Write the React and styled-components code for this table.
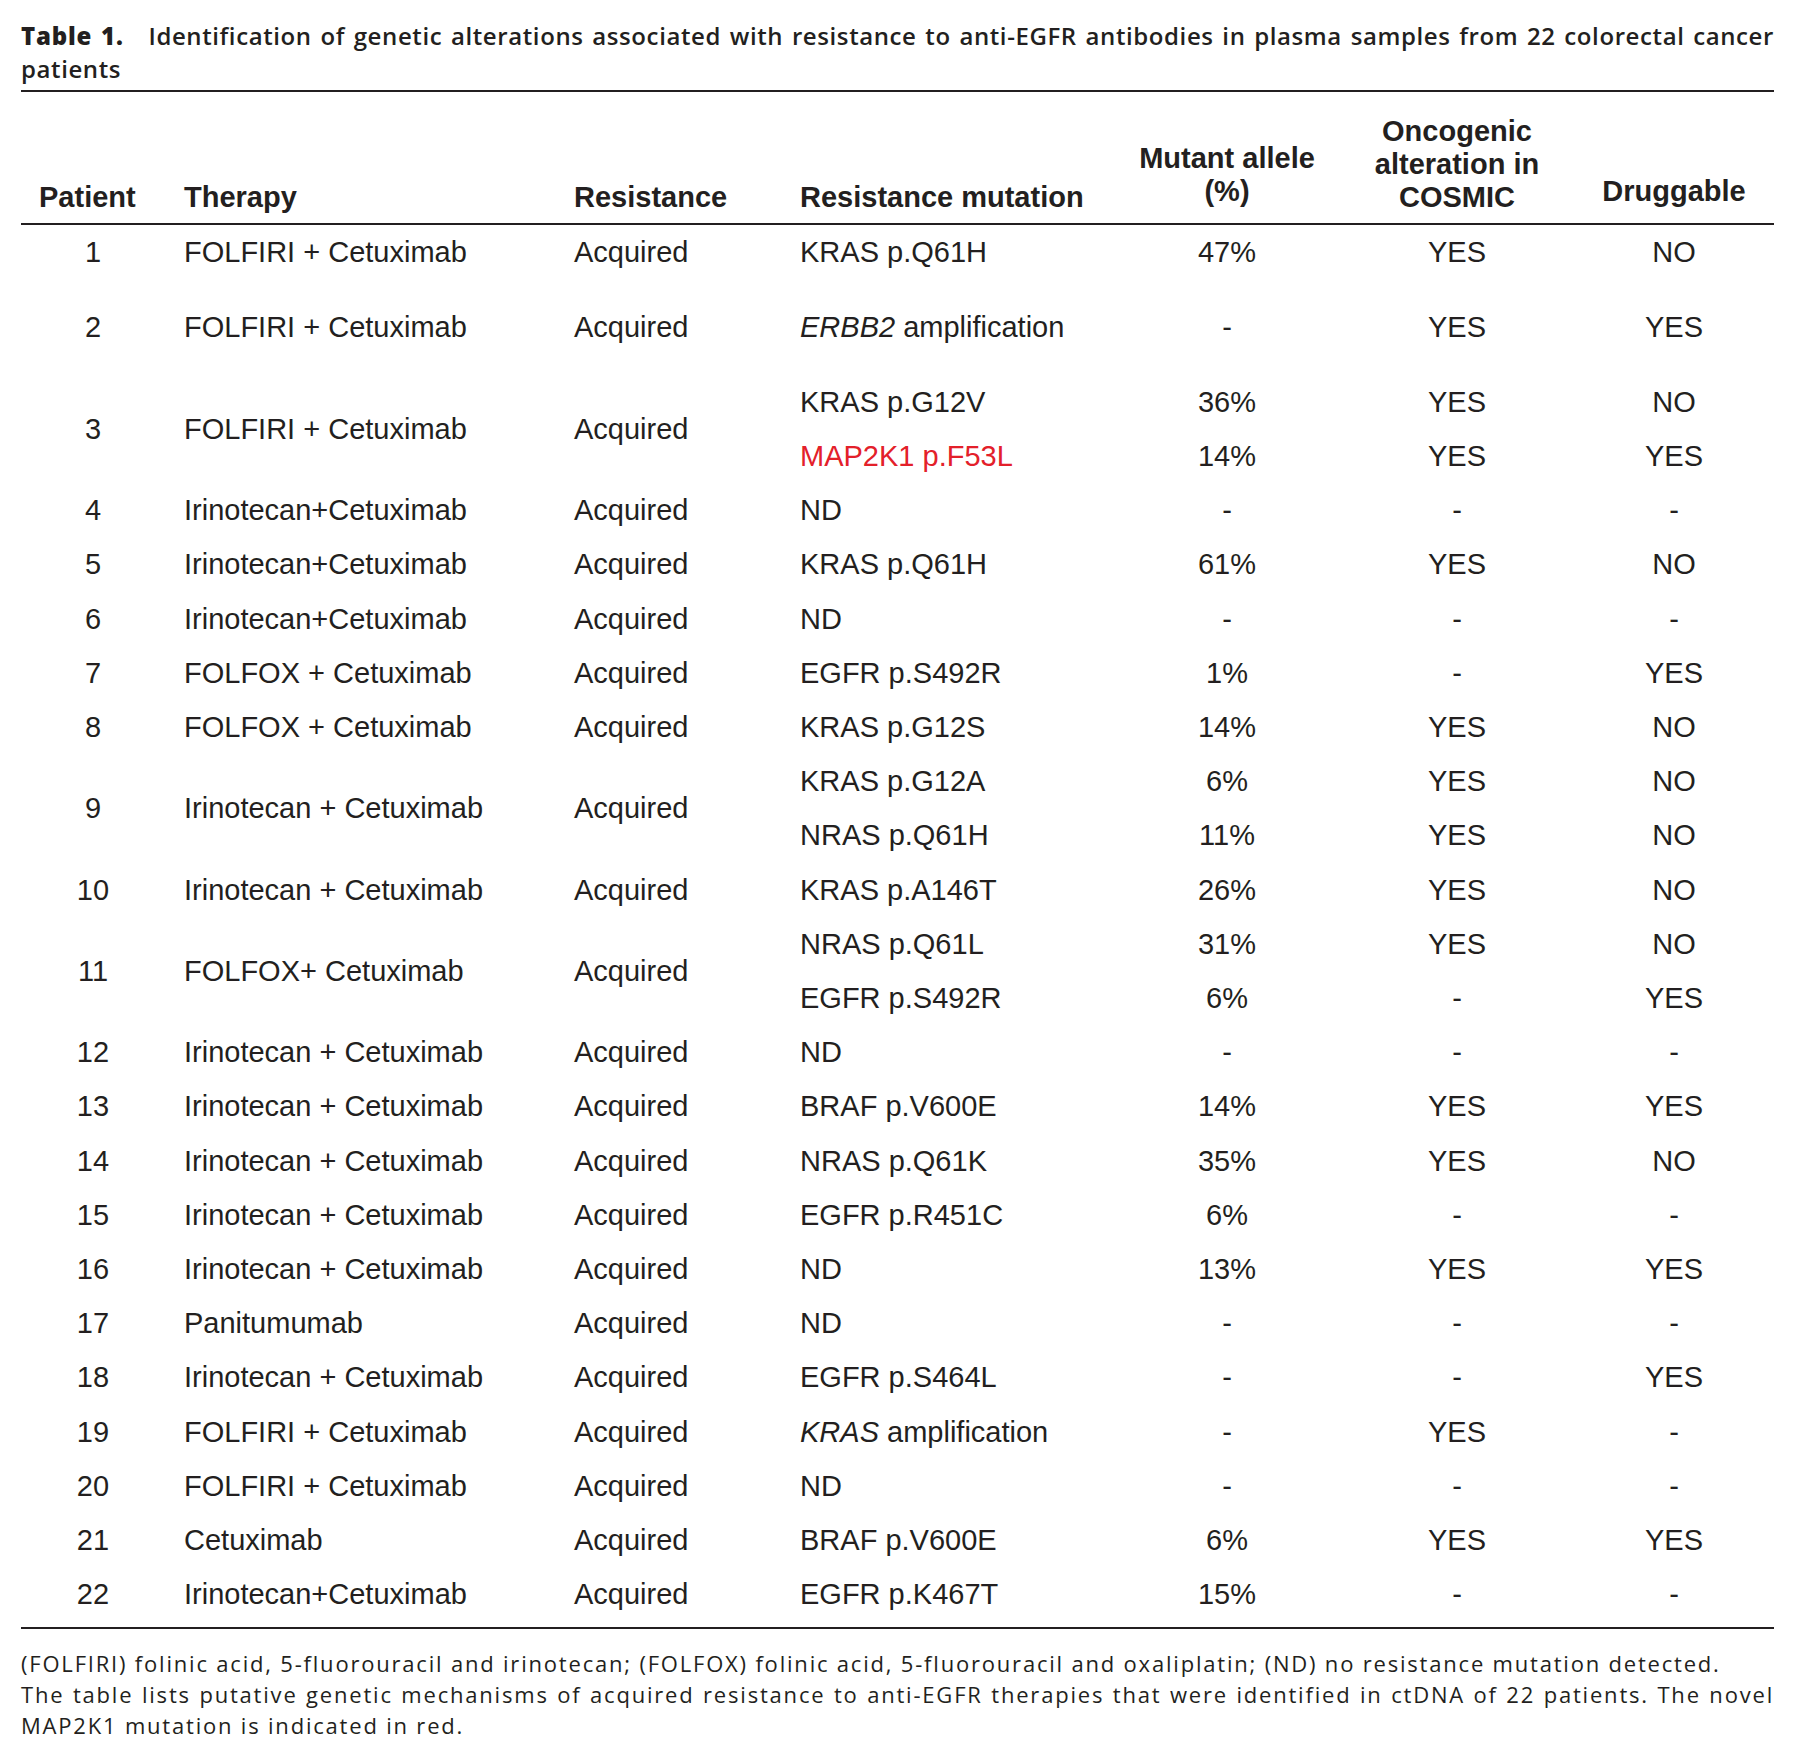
import React from "react";
import styled, { createGlobalStyle } from "styled-components";

const GlobalStyle = createGlobalStyle`
  html, body {
    margin: 0;
    padding: 0;
    background: #ffffff;
  }
  body {
    font-family: "Liberation Sans", Arial, sans-serif;
    color: #231f20;
  }
`;

const COLS = "163px 390px 226px 320px 214px 246px 188px";
const INK = "#231f20";

const Page = styled.div`
  width: 1753px;
  padding: 20px 26px 0 21px;
`;

const Caption = styled.div`
  font-family: "Open Sans", sans-serif;
  font-weight: 600;
  font-size: 24px;
  line-height: 32.7px;
  letter-spacing: 0.6px;
`;

// first caption line is stretched edge to edge like the printed one
const CaptionLine = styled.div`
  text-align: ${(p) => (p.$full ? "justify" : "left")};
  text-align-last: ${(p) => (p.$full ? "justify" : "auto")};
  white-space: ${(p) => (p.$full ? "nowrap" : "normal")};
`;

const CaptionLabel = styled.span`
  font-weight: 800;
  letter-spacing: 0.8px;
  margin-right: 16px;
`;

const Table = styled.div`
  margin-top: 5px;
  border-top: 2px solid ${INK};
  border-bottom: 2px solid ${INK};
`;

const HeadRow = styled.div`
  display: grid;
  grid-template-columns: ${COLS};
  align-items: end;
  height: 133px;
  box-sizing: border-box;
  padding-bottom: 9px;
  border-bottom: 2px solid ${INK};
  font-size: 29px;
  font-weight: 700;
  line-height: 33.3px;
`;

const HeadCell = styled.div`
  text-align: ${(p) => p.$align || "left"};
  padding-left: ${(p) => p.$indent || 0}px;
  margin-bottom: ${(p) => (p.$lift ? 6 : 0)}px;
`;

const Body = styled.div`
  padding-bottom: 6px;
`;

const Group = styled.div`
  display: grid;
  grid-template-columns: ${COLS};
  align-items: center;
  padding-bottom: ${(p) => (p.$tall ? 20.5 : 0)}px;
  font-size: 29px;
  line-height: 54.2px;
`;

const Cell = styled.div`
  grid-row: span ${(p) => p.$span || 1};
  text-align: ${(p) => p.$align || "left"};
  padding-right: ${(p) => p.$padRight || 0}px;
  color: ${(p) => (p.$red ? "#e3202a" : "inherit")};
  white-space: nowrap;
`;

const Gene = styled.i`
  font-style: italic;
`;

const Notes = styled.div`
  margin-top: 19px;
  font-family: "Open Sans", sans-serif;
  font-size: 22px;
  line-height: 31px;
  letter-spacing: 1.8px;
`;

const Note = styled.p`
  margin: 0;
  text-align: ${(p) => (p.$justify ? "justify" : "left")};
`;

const rows = [
  { id: 1, therapy: "FOLFIRI + Cetuximab", tall: true, muts: [["KRAS p.Q61H", "47%", "YES", "NO"]] },
  { id: 2, therapy: "FOLFIRI + Cetuximab", tall: true, muts: [[<><Gene>ERBB2</Gene> amplification</>, "-", "YES", "YES"]] },
  {
    id: 3,
    therapy: "FOLFIRI + Cetuximab",
    muts: [
      ["KRAS p.G12V", "36%", "YES", "NO"],
      ["MAP2K1 p.F53L", "14%", "YES", "YES", true],
    ],
  },
  { id: 4, therapy: "Irinotecan+Cetuximab", muts: [["ND", "-", "-", "-"]] },
  { id: 5, therapy: "Irinotecan+Cetuximab", muts: [["KRAS p.Q61H", "61%", "YES", "NO"]] },
  { id: 6, therapy: "Irinotecan+Cetuximab", muts: [["ND", "-", "-", "-"]] },
  { id: 7, therapy: "FOLFOX + Cetuximab", muts: [["EGFR p.S492R", "1%", "-", "YES"]] },
  { id: 8, therapy: "FOLFOX + Cetuximab", muts: [["KRAS p.G12S", "14%", "YES", "NO"]] },
  {
    id: 9,
    therapy: "Irinotecan + Cetuximab",
    muts: [
      ["KRAS p.G12A", "6%", "YES", "NO"],
      ["NRAS p.Q61H", "11%", "YES", "NO"],
    ],
  },
  { id: 10, therapy: "Irinotecan + Cetuximab", muts: [["KRAS p.A146T", "26%", "YES", "NO"]] },
  {
    id: 11,
    therapy: "FOLFOX+ Cetuximab",
    muts: [
      ["NRAS p.Q61L", "31%", "YES", "NO"],
      ["EGFR p.S492R", "6%", "-", "YES"],
    ],
  },
  { id: 12, therapy: "Irinotecan + Cetuximab", muts: [["ND", "-", "-", "-"]] },
  { id: 13, therapy: "Irinotecan + Cetuximab", muts: [["BRAF p.V600E", "14%", "YES", "YES"]] },
  { id: 14, therapy: "Irinotecan + Cetuximab", muts: [["NRAS p.Q61K", "35%", "YES", "NO"]] },
  { id: 15, therapy: "Irinotecan + Cetuximab", muts: [["EGFR p.R451C", "6%", "-", "-"]] },
  { id: 16, therapy: "Irinotecan + Cetuximab", muts: [["ND", "13%", "YES", "YES"]] },
  { id: 17, therapy: "Panitumumab", muts: [["ND", "-", "-", "-"]] },
  { id: 18, therapy: "Irinotecan + Cetuximab", muts: [["EGFR p.S464L", "-", "-", "YES"]] },
  { id: 19, therapy: "FOLFIRI + Cetuximab", muts: [[<><Gene>KRAS</Gene> amplification</>, "-", "YES", "-"]] },
  { id: 20, therapy: "FOLFIRI + Cetuximab", muts: [["ND", "-", "-", "-"]] },
  { id: 21, therapy: "Cetuximab", muts: [["BRAF p.V600E", "6%", "YES", "YES"]] },
  { id: 22, therapy: "Irinotecan+Cetuximab", muts: [["EGFR p.K467T", "15%", "-", "-"]] },
];

const App = () => {
  return (
    <Page>
      <GlobalStyle />
      <Caption>
        <CaptionLine $full>
          <CaptionLabel>Table 1.</CaptionLabel> Identification of genetic alterations associated
          with resistance to anti-EGFR antibodies in plasma samples from 22 colorectal cancer
        </CaptionLine>
        <CaptionLine>patients</CaptionLine>
      </Caption>

      <Table>
        <HeadRow>
          <HeadCell $indent={18}>Patient</HeadCell>
          <HeadCell>Therapy</HeadCell>
          <HeadCell>Resistance</HeadCell>
          <HeadCell>Resistance mutation</HeadCell>
          <HeadCell $align="center" $lift>
            Mutant allele
            <br />
            (%)
          </HeadCell>
          <HeadCell $align="center">
            Oncogenic
            <br />
            alteration in
            <br />
            COSMIC
          </HeadCell>
          <HeadCell $align="center" $lift>
            Druggable
          </HeadCell>
        </HeadRow>

        <Body>
          {rows.map((r) => (
            <Group key={r.id} $tall={r.tall}>
              <Cell $span={r.muts.length} $align="center" $padRight={19}>
                {r.id}
              </Cell>
              <Cell $span={r.muts.length}>{r.therapy}</Cell>
              <Cell $span={r.muts.length}>Acquired</Cell>
              {r.muts.map((m, i) => (
                <React.Fragment key={i}>
                  <Cell $red={m[4]}>{m[0]}</Cell>
                  <Cell $align="center">{m[1]}</Cell>
                  <Cell $align="center">{m[2]}</Cell>
                  <Cell $align="center">{m[3]}</Cell>
                </React.Fragment>
              ))}
            </Group>
          ))}
        </Body>
      </Table>

      <Notes>
        <Note>
          (FOLFIRI) folinic acid, 5-fluorouracil and irinotecan; (FOLFOX) folinic acid, 5-fluorouracil
          and oxaliplatin; (ND) no resistance mutation detected.
        </Note>
        <Note $justify>
          The table lists putative genetic mechanisms of acquired resistance to anti-EGFR therapies
          that were identified in ctDNA of 22 patients. The novel MAP2K1 mutation is indicated in red.
        </Note>
      </Notes>
    </Page>
  );
};

export default App;
